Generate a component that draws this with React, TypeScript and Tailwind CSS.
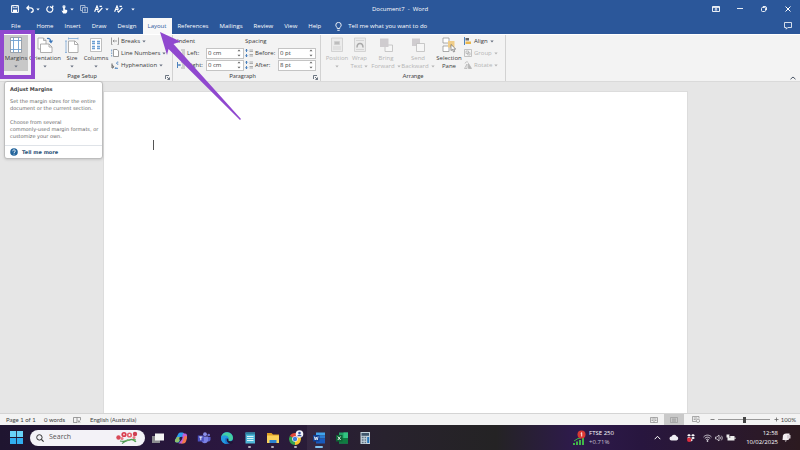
import React from 'react';
import clsx from 'clsx';

interface IconProps {
  className?: string;
}

const Caret: React.FC<IconProps> = ({ className }) => (
  <svg className={clsx('shrink-0', className)} width="4" height="3" viewBox="0 0 4 3">
    <path d="M0.3 0.5h3.4L2 2.5z" fill="currentColor" />
  </svg>
);

const Launcher: React.FC = () => (
  <button type="button" aria-label="More settings" className="absolute right-0.5 bottom-px text-gray-600">
    <svg width="5" height="5" viewBox="0 0 5 5" fill="none" stroke="currentColor" strokeWidth="0.8">
      <path d="M0.5 4V0.5H4M2 2l2.4 2.4M4.5 2.4v2.1H2.4" />
    </svg>
  </button>
);

/* Title bar */

const quickAccess = [
  {
    name: 'Save',
    box: 'w-[14px]',
    icon: (
      <svg width="8" height="8" viewBox="0 0 8 8" fill="none" stroke="currentColor">
        <path d="M0.6 0.6h6.8v6.8H0.6z" />
        <path d="M2 4.6h4v2.8H2z" fill="currentColor" stroke="none" />
        <path d="M2 0.6v2h4v-2" strokeWidth="0.7" />
      </svg>
    ),
  },
  {
    name: 'Undo',
    box: 'w-[20px]',
    caret: true,
    icon: (
      <svg width="8" height="8" viewBox="0 0 8 8" fill="none" stroke="currentColor" strokeWidth="1.3">
        <path d="M3 0.8L0.9 2.9 3 5M1 2.9h3.6C6.3 2.9 7.2 4 7.2 5.2S6.2 7.3 4.8 7.3" />
      </svg>
    ),
  },
  {
    name: 'Repeat',
    box: 'w-[12px]',
    icon: (
      <svg width="8" height="8" viewBox="0 0 8 8" fill="none" stroke="currentColor" strokeWidth="1.2">
        <path d="M2.6 1.5A3 3 0 1 0 6 2.2M7.2 0.6L6 2.8 3.9 1.5" />
      </svg>
    ),
  },
  {
    name: 'Touch mode',
    box: 'w-[20px]',
    caret: true,
    icon: (
      <svg width="7" height="9" viewBox="0 0 7 9" fill="currentColor">
        <circle cx="3" cy="1.8" r="1.7" opacity="0.7" />
        <path d="M2.2 1.5h1.6v3l2.4 0.6v2L5 8.6H2.2L0.4 5.6l1.8 0.3z" />
      </svg>
    ),
  },
  {
    name: 'Copy',
    box: 'w-[12px]',
    icon: (
      <svg width="8" height="8" viewBox="0 0 8 8" fill="none" stroke="currentColor" strokeWidth="0.8" opacity="0.7">
        <path d="M0.5 0.5h4.5v1.5M0.5 0.5v5h1.5M2.5 2.5h5v5h-5zM4 4.2h2M4 5.8h2" />
      </svg>
    ),
  },
  {
    name: 'Font',
    box: 'w-[20px]',
    caret: true,
    icon: (
      <svg width="9" height="8" viewBox="0 0 9 8" fill="none" stroke="currentColor" strokeWidth="1.2">
        <path d="M0.6 6.8L3 1l1.4 3.6M1.5 4.5h2.6M3.4 5.6l1.2 1.4L8.4 2.8M5.5 1.3h2.4" />
      </svg>
    ),
  },
  {
    name: 'Styles',
    box: 'w-[12px]',
    icon: (
      <svg width="9" height="8" viewBox="0 0 9 8" fill="none" stroke="currentColor" strokeWidth="1.2">
        <path d="M0.6 6.8L3 1l1.4 3.6M1.5 4.5h2.6M3.4 5.6l1.2 1.4L8.4 2.8M5.5 1.3h2.4" />
      </svg>
    ),
  },
];

const TitleBar: React.FC = () => (
  <header className="grid h-[18px] grid-cols-[1fr_auto_1fr] items-center">
    <div className="flex items-center gap-px pl-2">
      {quickAccess.map((item) => (
        <button
          key={item.name}
          type="button"
          aria-label={item.name}
          className={clsx('flex items-center justify-center gap-0.5', item.box)}
        >
          {item.icon}
          {item.caret && <Caret />}
        </button>
      ))}
      <button type="button" aria-label="Customize Quick Access Toolbar" className="ml-1.5">
        <Caret />
      </button>
    </div>
    <h1 className="text-[6px]">Document7&nbsp; -&nbsp; Word</h1>
    <div className="flex items-center justify-end">
      <button type="button" aria-label="Ribbon display options" className="flex w-6 justify-center">
        <svg width="8" height="6" viewBox="0 0 8 6" fill="none" stroke="currentColor" strokeWidth="0.9">
          <path d="M0.5 0.5h7v5h-7zM0.5 1.6h7M4 5V2.5M2.7 3.7L4 2.5l1.3 1.2" />
        </svg>
      </button>
      <button type="button" aria-label="Minimize" className="flex w-6 justify-center">
        <svg width="6" height="6" viewBox="0 0 6 6" stroke="currentColor" strokeWidth="0.9">
          <path d="M0 2.5h6" />
        </svg>
      </button>
      <button type="button" aria-label="Restore" className="flex w-6 justify-center">
        <svg width="6" height="6" viewBox="0 0 6 6" fill="none" stroke="currentColor" strokeWidth="0.9">
          <rect x="0.5" y="1.5" width="4" height="4" rx="1" />
          <path d="M1.8 0.5h2.2a1.5 1.5 0 0 1 1.5 1.5v2.2" />
        </svg>
      </button>
      <button type="button" aria-label="Close" className="flex w-6 justify-center">
        <svg width="6" height="6" viewBox="0 0 6 6" stroke="currentColor">
          <path d="M0.5 0.5l5 5M5.5 0.5l-5 5" />
        </svg>
      </button>
    </div>
  </header>
);

const tabs = ['File', 'Home', 'Insert', 'Draw', 'Design', 'Layout', 'References', 'Mailings', 'Review', 'View', 'Help'];

const TabBar: React.FC = () => (
  <nav className="flex h-4 items-stretch text-[6px]">
    {tabs.map((tab) => (
      <button
        key={tab}
        type="button"
        className={clsx(
          'whitespace-nowrap',
          tab === 'File' ? 'px-[11px]' : 'pr-[6px] pl-[5px]',
          tab === 'Layout' && 'bg-[#f8f8f8] text-[#2b579a]',
        )}
      >
        {tab}
      </button>
    ))}
    <button type="button" className="ml-2 flex items-center gap-1.5 whitespace-nowrap">
      <svg width="7" height="9" viewBox="0 0 7 9" fill="none" stroke="currentColor" strokeWidth="0.9">
        <path d="M2.3 6.5C2.3 5 0.8 4.7 0.8 3.1a2.7 2.7 0 0 1 5.4 0C6.2 4.7 4.7 5 4.7 6.5zM2.3 8.3h2.4" />
      </svg>
      Tell me what you want to do
    </button>
    <button type="button" aria-label="Comments" className="mr-2 ml-auto self-center">
      <svg width="8" height="8" viewBox="0 0 8 8" fill="none" stroke="currentColor" strokeWidth="0.8">
        <path d="M0.5 0.5h7v5H3.8L2.2 7.2V5.5H0.5z" />
      </svg>
    </button>
  </nav>
);

/* Ribbon */

const MarginsIcon = (
  <svg width="14" height="16" viewBox="0 0 14 16" fill="none">
    <path d="M1.5 0.5h11v15h-11z" fill="#fff" stroke="#8c9098" strokeWidth="0.8" />
    <path d="M4.5 0.5v15M9.5 0.5v15M1.5 3.5h11M1.5 12.5h11" stroke="#6d9fd0" strokeWidth="0.9" />
  </svg>
);

const OrientationIcon = (
  <svg width="16" height="16" viewBox="0 0 16 16" fill="none">
    <path d="M1 1h5.5l2.5 2.5V12H1z" fill="#fff" stroke="#9c9c9c" strokeWidth="0.8" />
    <path d="M3.5 7h8.5l3 3v5.5H3.5z" fill="#fff" stroke="#9c9c9c" strokeWidth="0.8" />
    <path d="M12 7v3h3M6.5 1v2.5H9" stroke="#9c9c9c" strokeWidth="0.8" />
    <path d="M10 1.5c2.5-0.5 4 1 4 3.5M12.3 3.6L14 5.5l1.5-2" stroke="#3975b8" strokeWidth="1.2" />
  </svg>
);

const SizeIcon = (
  <svg width="14" height="16" viewBox="0 0 14 16" fill="none">
    <path d="M3.5 4h6.5l3 3v8.5H3.5z" fill="#fff" stroke="#9c9c9c" strokeWidth="0.8" />
    <path d="M9.5 4v3.5H13" stroke="#9c9c9c" strokeWidth="0.8" />
    <path d="M3.5 1.5H13M3.5 0.5v2M13 0.5v2M1 4v11.5M0 4h2M0 15.5h2" stroke="#7ba7d4" strokeWidth="0.8" />
  </svg>
);

const ColumnsIcon = (
  <svg width="12" height="16" viewBox="0 0 12 16" fill="none">
    <path d="M0.5 1.5h11v13H0.5z" fill="#fff" stroke="#a6a6a6" strokeWidth="0.7" />
    <path
      d="M2 4.5h3M2 6.5h3M2 9.5h3M2 11.5h3M7 4.5h3M7 6.5h3M7 9.5h3M7 11.5h3"
      stroke="#6b9fd3"
      strokeWidth="1.4"
    />
  </svg>
);

const PositionIcon = (
  <svg width="14" height="16" viewBox="0 0 14 16" fill="none" stroke="#cbcbcb">
    <path d="M1.5 1h11v13.5h-11z" fill="#ebebeb" strokeWidth="0.8" />
    <path d="M4.5 4.5h5v3h-5z" fill="#bdbdbd" strokeWidth="0.6" />
    <path d="M3 10h8M3 12h8" strokeWidth="0.7" />
  </svg>
);

const WrapIcon = (
  <svg width="14" height="16" viewBox="0 0 14 16" fill="none" stroke="#cbcbcb">
    <path d="M1.5 1h11v13.5h-11z" fill="#ebebeb" strokeWidth="0.8" />
    <path d="M3 3.5h8M3 12.5h8" strokeWidth="0.7" />
    <path d="M4 10.5C4 5 10 5 10 10.5" stroke="#a9a9a9" strokeWidth="1.5" />
  </svg>
);

const ForwardIcon = (
  <svg width="14" height="16" viewBox="0 0 14 16">
    <path d="M6 8h7.5v6.5H6z" fill="#f6f6f6" stroke="#bdbdbd" strokeWidth="0.8" />
    <path d="M1 1.5h8.5V10H1z" fill="#cfcccf" />
  </svg>
);

const BackwardIcon = (
  <svg width="14" height="16" viewBox="0 0 14 16">
    <path d="M1 1.5h8V9H1z" fill="#cfcccf" />
    <path d="M5.5 6.5h8v8h-8z" fill="#f6f6f6" stroke="#bdbdbd" strokeWidth="0.8" />
  </svg>
);

const SelectionIcon = (
  <svg width="14" height="16" viewBox="0 0 14 16">
    <path d="M1 1h6v5H1zM1 9h6v5.5H1z" fill="#fff" stroke="#8a8a8a" strokeWidth="0.7" />
    <path d="M6 4h6.5v6.5H6z" fill="#f0cd88" />
    <path d="M9 7.5v6l1.5-1.2 1 2.7 1.2-0.5-1-2.5h2z" fill="#fff" stroke="#555" strokeWidth="0.6" />
  </svg>
);

interface LargeButtonProps {
  label: string;
  second?: string;
  icon: React.ReactNode;
  width: string;
  caret?: boolean;
  active?: boolean;
  disabled?: boolean;
}

const LargeButton: React.FC<LargeButtonProps> = ({ label, second, icon, width, caret = true, active, disabled }) => (
  <button
    type="button"
    disabled={disabled}
    className={clsx(
      'flex shrink-0 flex-col items-center whitespace-nowrap',
      width,
      active && 'bg-[#c8c8c8]',
      disabled && 'text-[#b5b5b5]',
    )}
  >
    <span className="flex h-[19px] items-end pb-px">{icon}</span>
    <span className="leading-2">{label}</span>
    <span className="flex h-2 items-center gap-0.5 leading-2">
      {second}
      {caret && <Caret className={disabled ? 'text-[#b5b5b5]' : 'text-gray-500'} />}
    </span>
  </button>
);

interface SmallButtonProps {
  label: string;
  icon: React.ReactNode;
  disabled?: boolean;
}

const SmallButton: React.FC<SmallButtonProps> = ({ label, icon, disabled }) => (
  <button
    type="button"
    disabled={disabled}
    className={clsx('flex h-3 items-center gap-0.5 whitespace-nowrap', disabled && 'text-[#b5b5b5]')}
  >
    {icon}
    {label}
    <Caret className={disabled ? 'text-[#b5b5b5]' : 'text-gray-500'} />
  </button>
);

interface GroupProps {
  title: string;
  width: string;
  launcher?: boolean;
  children: React.ReactNode;
}

const Group: React.FC<GroupProps> = ({ title, width, launcher, children }) => (
  <section className={clsx('relative flex shrink-0 flex-col border-r border-[#d2d2d2]', width)}>
    <div className="flex h-9">{children}</div>
    <h2 className={clsx("text-center font-['Lato',sans-serif] leading-[10px] text-[#444]", launcher && 'pr-2')}>
      {title}
    </h2>
    {launcher && <Launcher />}
  </section>
);

const IndentIcon: React.FC<{ flip?: boolean }> = ({ flip }) => (
  <svg width="8" height="8" viewBox="0 0 8 8" fill="none">
    <path d="M4 1h4M5 3h3M5 5h3M4 7h4" stroke="#8c8c8c" strokeWidth="0.7" />
    <path
      d={flip ? 'M0.5 1v6M4 4H1.5M2.5 3l-1 1 1 1' : 'M0.5 1v6M1.5 4H4M3 3l1 1-1 1'}
      stroke="#3975b8"
      strokeWidth="0.9"
    />
  </svg>
);

const SpacingIcon: React.FC = () => (
  <svg width="8" height="8" viewBox="0 0 8 8" fill="none">
    <path d="M4.5 1H8M4.5 2.5H8M4.5 5.5H8M4.5 7H8" stroke="#8c8c8c" strokeWidth="0.7" />
    <path
      d="M1.5 0v3M0.3 1.5L1.5 0.3l1.2 1.2M1.5 5v3M0.3 6.5l1.2 1.2 1.2-1.2"
      stroke="#3975b8"
      strokeWidth="0.9"
    />
  </svg>
);

interface SpinFieldProps {
  id: string;
  label: string;
  value: string;
  icon: React.ReactNode;
  labelWidth: string;
}

const SpinField: React.FC<SpinFieldProps> = ({ id, label, value, icon, labelWidth }) => (
  <div className="flex h-3 items-center">
    <label htmlFor={id} className={clsx('flex items-center gap-0.5 whitespace-nowrap', labelWidth)}>
      {icon}
      {label}
    </label>
    <div className="flex h-[11px] w-[38px] items-center border border-[#c4c4c4] bg-white pr-0.5 pl-px">
      <input id={id} defaultValue={value} className="w-0 min-w-0 flex-1 bg-transparent outline-none" />
      <svg width="4" height="8" viewBox="0 0 4 8" fill="#666">
        <path d="M2 0.5L3.5 2.3h-3zM2 7.5L3.5 5.7h-3z" />
      </svg>
    </div>
  </div>
);

const Ribbon: React.FC = () => (
  <div className="flex h-12 border-t border-b border-t-white border-b-[#dadada] bg-[#f3f3f3] text-[6px] text-[#3b3b3b]">
    <Group title="Page Setup" width="w-[173px]" launcher>
      <div className="flex pl-1">
        <LargeButton label="Margins" icon={MarginsIcon} width="w-6" active />
        <LargeButton label="Orientation" icon={OrientationIcon} width="w-[34px]" />
        <LargeButton label="Size" icon={SizeIcon} width="w-5" />
        <LargeButton label="Columns" icon={ColumnsIcon} width="w-7" />
      </div>
      <div className="flex flex-col pl-px">
        <SmallButton
          label="Breaks"
          icon={
            <svg width="8" height="8" viewBox="0 0 8 8" fill="none" stroke="#888" strokeWidth="0.8">
              <path d="M0.5 0.5v7h1M7.5 0.5v7h-1M2 4h4M3.2 2.8L2 4l1.2 1.2" />
            </svg>
          }
        />
        <SmallButton
          label="Line Numbers"
          icon={
            <svg width="8" height="8" viewBox="0 0 8 8" fill="none" strokeWidth="0.7">
              <path d="M2.5 0.5h3.5l1.5 1.5v5.5h-5z" fill="#fff" stroke="#777" />
              <path d="M0.7 0.5v2M0.7 3.5v1.5M0.7 6v1.5" stroke="#3975b8" />
            </svg>
          }
        />
        <SmallButton
          label="Hyphenation"
          icon={
            <svg width="8" height="8" viewBox="0 0 8 8" fill="none" strokeWidth="0.9">
              <path d="M1 2.5v4.5M1 5c2.2-1.2 2.2 2.5 0 2" stroke="#555" />
              <path d="M7.3 1.2c-2.2-0.7-2.2 2.5 0 2M4 7.3h3M5 6.3l-1 1" stroke="#3975b8" />
            </svg>
          }
        />
      </div>
    </Group>

    <Group title="Paragraph" width="w-[148px]" launcher>
      <div className="flex gap-px pl-1">
        <div>
          <h3 className="h-3 leading-3">Indent</h3>
          <SpinField id="indent-left" label="Left:" value="0 cm" icon={<IndentIcon />} labelWidth="w-[29px]" />
          <SpinField id="indent-right" label="Right:" value="0 cm" icon={<IndentIcon flip />} labelWidth="w-[29px]" />
        </div>
        <div>
          <h3 className="h-3 leading-3">Spacing</h3>
          <SpinField id="space-before" label="Before:" value="0 pt" icon={<SpacingIcon />} labelWidth="w-[33px]" />
          <SpinField id="space-after" label="After:" value="8 pt" icon={<SpacingIcon />} labelWidth="w-[33px]" />
        </div>
      </div>
    </Group>

    <Group title="Arrange" width="w-[185px]">
      <div className="flex pl-1">
        <LargeButton label="Position" icon={PositionIcon} width="w-6" disabled />
        <LargeButton label="Wrap" second="Text" icon={WrapIcon} width="w-[21px]" disabled />
        <LargeButton label="Bring" second="Forward" icon={ForwardIcon} width="w-8" disabled />
        <LargeButton label="Send" second="Backward" icon={BackwardIcon} width="w-8" disabled />
        <LargeButton label="Selection" second="Pane" icon={SelectionIcon} width="w-[30px]" caret={false} />
      </div>
      <div className="flex flex-col">
        <SmallButton
          label="Align"
          icon={
            <svg width="8" height="8" viewBox="0 0 8 8">
              <path d="M0.5 0v8" stroke="#3975b8" strokeWidth="0.9" />
              <path d="M1.5 1h3.5v2.5H1.5z" fill="#666" />
              <path d="M1.5 4.5h5.5V7H1.5z" fill="#e9b64c" />
            </svg>
          }
        />
        <SmallButton
          label="Group"
          disabled
          icon={
            <svg width="8" height="8" viewBox="0 0 8 8" fill="none" stroke="#b5b5b5" strokeWidth="0.8">
              <path d="M0.5 0.5h7v7h-7zM2 2h2.5v2.5H2zM3.7 3.7H6V6H3.7z" />
            </svg>
          }
        />
        <SmallButton
          label="Rotate"
          disabled
          icon={
            <svg width="8" height="8" viewBox="0 0 8 8" fill="none" stroke="#b5b5b5" strokeWidth="0.8">
              <path d="M0.5 7.5L3 3v4.5z" />
              <path d="M4.5 2.5v5h3z" fill="#b5b5b5" />
              <path d="M1 2.5C1.5 0.5 3.5 0.5 4.2 1.5" />
            </svg>
          }
        />
      </div>
    </Group>

    <button type="button" aria-label="Collapse the ribbon" className="mr-1 mb-px ml-auto self-end text-gray-600">
      <svg width="6" height="4" viewBox="0 0 6 4" fill="none" stroke="currentColor">
        <path d="M0.5 3.2L3 1l2.5 2.2" />
      </svg>
    </button>
  </div>
);

const MarginsTooltip: React.FC = () => (
  <div
    role="tooltip"
    className="absolute top-[81px] left-1 w-[99px] rounded-[3px] border border-[#bdbdbd] bg-white font-['DejaVu_Sans',sans-serif] text-[5px] leading-[7px] whitespace-nowrap text-[#666] shadow"
  >
    <div className="px-[5px] pt-1 pb-[5px]">
      <p className="mb-[5px] font-bold text-[#444]">Adjust Margins</p>
      <p className="mb-[7px]">
        Set the margin sizes for the entire
        <br />
        document or the current section.
      </p>
      <p>
        Choose from several
        <br />
        commonly-used margin formats, or
        <br />
        customize your own.
      </p>
    </div>
    <a
      href="#margins"
      className="flex h-[13px] items-center gap-1 border-t border-[#dfe3e8] px-[5px] font-bold text-[#2d5378]"
    >
      <svg width="8" height="8" viewBox="0 0 8 8" fill="none">
        <circle cx="4" cy="4" r="3.8" fill="#24659c" />
        <path d="M2.7 3.2C2.7 1.4 5.4 1.5 5.3 3.1 5.2 4 4 4 4 5M4 5.7v0.8" stroke="#fff" strokeWidth="0.9" />
      </svg>
      Tell me more
    </a>
  </div>
);

const StatusBar: React.FC = () => (
  <footer className="flex h-3 items-center border-t border-[#d4d4d4] bg-[#f3f3f3] pr-1 pl-1.5 font-['Lato',sans-serif] text-[6px] text-[#444]">
    <span className="w-[38px]">Page 1 of 1</span>
    <span className="w-[29px]">0 words</span>
    <button type="button" aria-label="Proofing" className="w-[17px]">
      <svg width="8" height="6" viewBox="0 0 8 6" fill="none" stroke="#777" strokeWidth="0.7">
        <path d="M4 5.5H0.5V0.5h7v2.5M4 0.5v5M4.8 3.5l2.5 2M7.3 3.5l-2.5 2" />
      </svg>
    </button>
    <span>English (Australia)</span>
    <div className="ml-auto flex items-center">
      <button type="button" aria-label="Read mode" className="flex w-5 justify-center">
        <svg width="8" height="6" viewBox="0 0 8 6" fill="none" stroke="#888" strokeWidth="0.7">
          <path d="M0.5 0.5h7v5h-7zM4 0.5v5M1.5 2h1.5M1.5 3.5h1.5M5 2h1.5M5 3.5h1.5" />
        </svg>
      </button>
      <button type="button" aria-label="Print layout" className="flex h-[11px] w-5 items-center justify-center bg-[#c9c9c9]">
        <svg width="8" height="6" viewBox="0 0 8 6" fill="none" stroke="#999" strokeWidth="0.7">
          <path d="M0.5 0.5h7v5h-7zM2 2h4M2 3h4M2 4.2h4" />
        </svg>
      </button>
      <button type="button" aria-label="Web layout" className="flex w-6 justify-center">
        <svg width="8" height="7" viewBox="0 0 8 7" fill="none" stroke="#888" strokeWidth="0.7">
          <path d="M4 5.5H0.5V0.5h6.5v2M1.7 2h3.5M1.7 3.5h2" />
          <circle cx="6" cy="4.8" r="1.7" />
        </svg>
      </button>
      <button type="button" aria-label="Zoom out" className="flex w-2 justify-center">
        <svg width="5" height="5" viewBox="0 0 5 5" stroke="#666" strokeWidth="0.8">
          <path d="M0.5 2.5h4" />
        </svg>
      </button>
      <input
        type="range"
        aria-label="Zoom"
        min={0}
        max={100}
        defaultValue={50}
        className="mx-0.5 h-2 w-[52px] appearance-none bg-[linear-gradient(#999,#999)] bg-[length:100%_1px] bg-center bg-no-repeat [&::-webkit-slider-thumb]:h-1.5 [&::-webkit-slider-thumb]:w-[3px] [&::-webkit-slider-thumb]:appearance-none [&::-webkit-slider-thumb]:bg-[#444]"
      />
      <button type="button" aria-label="Zoom in" className="flex w-2 justify-center">
        <svg width="5" height="5" viewBox="0 0 5 5" stroke="#666" strokeWidth="0.8">
          <path d="M0.5 2.5h4M2.5 0.5v4" />
        </svg>
      </button>
      <span className="w-4 text-right">100%</span>
    </div>
  </footer>
);

/* Windows taskbar */

const apps = [
  {
    name: 'Task view',
    icon: (
      <svg width="14" height="14" viewBox="0 0 14 14">
        <path d="M1 5h8v7H1z" fill="#8c8c90" />
        <path d="M4 2.5h9V9.5H4z" fill="#f4f4f4" />
      </svg>
    ),
  },
  {
    name: 'Copilot',
    icon: (
      <svg width="14" height="14" viewBox="0 0 14 14">
        <path d="M4.500 2.5Q5 1.5 6.5 1.5h2q1.5 0 2 2L11 5 7 6 5 11.5H3Q0.5 11.5 1 9z" fill="#2a9df0" />
        <path d="M1 9Q0.5 11.5 3 11.5q2 0 2.5-2L6.5 6 3 6z" fill="#8fbf6a" />
        <path d="M9 2.5L7.5 9 4.5 12.5h3.5q1.5 0 2.2-1.8L13 6Q13.5 2.5 11 2.5z" fill="#c05fd6" />
        <path d="M10.5 5h1.2Q13.5 5 13 7.2l-1 3.3q-0.7 2-2.5 2H6.5Q8 12.5 8.7 10z" fill="#f2784c" />
        <path d="M5.8 6h2.7L8 8.5H5z" fill="#2b1742" />
      </svg>
    ),
  },
  {
    name: 'Teams',
    icon: (
      <svg width="14" height="14" viewBox="0 0 14 14">
        <circle cx="8" cy="3.2" r="1.9" fill="#8b8fe8" />
        <circle cx="11.7" cy="4" r="1.3" fill="#6f73d4" />
        <path d="M10 6h3.5v2.8a2 2 0 0 1-3.5 1z" fill="#5a5fc9" />
        <path d="M4.5 5.5h6.5v4a3.3 3.3 0 0 1-6.5 0z" fill="#7b80e4" />
        <path d="M0.8 4.5h6v6h-6z" fill="#4b50bf" />
        <path d="M2.2 6h3.2M3.8 6v3.2" stroke="#fff" strokeWidth="0.9" />
      </svg>
    ),
  },
  {
    name: 'Edge',
    icon: (
      <svg width="14" height="14" viewBox="0 0 14 14">
        <circle cx="7" cy="7" r="6" fill="#1b75cf" />
        <path d="M1.1 6.2A6 6 0 0 1 13 7c0 2-1.5 3-3.2 3C8.5 10 8 9.3 8.5 8.4 9.5 6 6 3.5 1.1 6.2z" fill="#43cfa3" />
        <path d="M1 6.5C2 3.5 8 3.5 8.5 7.5 6 5.5 4.3 8 5 10.2 5.7 12 7 13 7 13 3 13 0.7 10 1 6.5z" fill="#249be0" />
        <path d="M8.5 8.3C7.5 10 10 11 12.3 9.7L13 12l-2 1C7.5 12 6 10 7 7.5z" fill="#211437" />
      </svg>
    ),
  },
  {
    name: 'Notepad',
    running: true,
    icon: (
      <svg width="14" height="14" viewBox="0 0 14 14">
        <path d="M2.5 1.5h9.5v11H2.5z" fill="#4fb7d8" />
        <path d="M2.5 1.5h9.5V3.5H2.5z" fill="#2a7f9f" />
        <path d="M4 5.5h6.5M4 7.5h6.5M4 9.5h6.5" stroke="#d9f4fb" />
      </svg>
    ),
  },
  {
    name: 'File Explorer',
    running: true,
    icon: (
      <svg width="14" height="14" viewBox="0 0 14 14">
        <path d="M1 2h4.5l1.5 1.5h6v3H1z" fill="#e0a024" />
        <path d="M1 4.5h12v7.5H1z" fill="#fbd25b" />
        <path d="M3.5 12V9h7v3z" fill="#2d83d2" />
      </svg>
    ),
  },
  {
    name: 'Chrome',
    running: true,
    icon: (
      <svg width="16" height="16" viewBox="0 0 16 16">
        <path d="M7 9L1.8 6A6 6 0 0 1 12.2 6z" fill="#e04738" />
        <path d="M7 9L1.8 6A6 6 0 0 0 7 15z" fill="#34a353" />
        <path d="M7 9l5.2-3A6 6 0 0 1 7 15z" fill="#f9c62e" />
        <circle cx="7" cy="9" r="2.8" fill="#fff" />
        <circle cx="7" cy="9" r="2.2" fill="#3c7de0" />
        <circle cx="11.5" cy="4" r="3.8" fill="#f2f4fb" />
        <circle cx="11.5" cy="3" r="1.3" fill="#35509c" />
        <path d="M9.2 6.3c0.5-2 4-2 4.6 0z" fill="#35509c" />
      </svg>
    ),
  },
  {
    name: 'Word',
    active: true,
    icon: (
      <svg width="14" height="14" viewBox="0 0 14 14">
        <path d="M4 1.5h9v3H4z" fill="#41a5ee" />
        <path d="M4 4.5h9v3H4z" fill="#2b7cd3" />
        <path d="M4 7.5h9v5H4z" fill="#185abd" />
        <path d="M1 4h6.5v6.5H1z" fill="#103f91" />
        <path d="M2.3 5.5l0.9 3.5 1-3 1 3 0.9-3.5" stroke="#fff" strokeWidth="0.8" fill="none" />
      </svg>
    ),
  },
  {
    name: 'Excel',
    icon: (
      <svg width="14" height="14" viewBox="0 0 14 14">
        <path d="M4 1.5h9v11H4z" fill="#21a366" />
        <path d="M8.5 1.5H13V7H8.5z" fill="#33c481" />
        <path d="M4 7h9v5.5H4z" fill="#107c41" />
        <path d="M1 4h6.5v6.5H1z" fill="#0e6335" />
        <path d="M2.8 5.5l2.8 3.5M5.6 5.5L2.8 9" stroke="#fff" strokeWidth="0.9" />
      </svg>
    ),
  },
  {
    name: 'Calculator',
    icon: (
      <svg width="14" height="14" viewBox="0 0 14 14">
        <path d="M2.5 1h9.5v12H2.5z" fill="#c4d2dc" />
        <path d="M3.5 2h7.5v2.8H3.5z" fill="#40566c" />
        <path
          d="M3.8 6.5h1.8M3.8 9h1.8M3.8 11.5h1.8M6.6 6.5h1.5M6.6 9h1.5M6.6 11.5h1.5"
          stroke="#5f7384"
          strokeWidth="1.4"
        />
        <path d="M9.2 6h2v6h-2z" fill="#2473b8" />
      </svg>
    ),
  },
];

const Taskbar: React.FC = () => (
  <div className="flex h-[25px] items-center bg-[linear-gradient(90deg,#1f1530,#2b1740_30%,#28222e_48%,#242324_62%,#2e1a4c_72%,#28163f_80%,#2c1a20)] pl-[10px] text-white">
    <button type="button" aria-label="Start">
      <svg width="13" height="13" viewBox="0 0 13 13">
        <path d="M0 0h6.1v6.1H0zM6.900 0H13v6.1H6.9z" fill="#68d2f8" />
        <path d="M0 6.9h6.1V13H0zM6.9 6.9H13V13H6.9z" fill="#32aef0" />
      </svg>
    </button>
    <label className="ml-[7px] flex h-4 w-[115px] items-center rounded-full bg-[#f3f2f7] px-1.5 text-[#555]">
      <svg width="8" height="8" viewBox="0 0 8 8" fill="none" stroke="#333" className="mr-[5px] shrink-0">
        <circle cx="3.4" cy="3.4" r="2.7" />
        <path d="M5.4 5.4L7.6 7.6" strokeWidth="1.2" />
      </svg>
      <input
        type="search"
        aria-label="Search"
        placeholder="Search"
        className="w-0 min-w-0 flex-1 text-[7px] outline-none placeholder:text-[#555]"
      />
      <svg width="24" height="13" viewBox="0 0 24 13" fill="none">
        <path d="M5 10Q10 11 14 9T21 11M7 12.5Q12 9 20 8" stroke="#4f9a55" strokeWidth="1.2" />
        <path d="M9 10l4-2 2 2zM17 9l4-1-1 3z" fill="#67ae60" />
        <circle cx="3.5" cy="6.5" r="2.2" fill="#d84a58" />
        <circle cx="9" cy="3.5" r="2.6" fill="#d93c4d" />
        <circle cx="9" cy="3.5" r="1" fill="#f8d0cf" />
        <circle cx="14.5" cy="4" r="2.6" fill="#e4606b" />
        <circle cx="14.5" cy="4" r="1" fill="#fff" />
        <circle cx="20" cy="3" r="2.2" fill="#cf3f52" />
        <circle cx="19" cy="6.5" r="1.5" fill="#e67b82" />
        <circle cx="7" cy="7.5" r="1.5" fill="#e67b82" />
      </svg>
    </label>
    <div className="ml-px flex self-stretch">
      {apps.map((app) => (
        <button
          key={app.name}
          type="button"
          aria-label={app.name}
          className={clsx('relative flex w-[23px] items-center justify-center', app.active && 'bg-white/5')}
        >
          {app.icon}
          {(app.running || app.active) && (
            <span
              className={clsx(
                'absolute bottom-0.5 h-0.5 rounded-full',
                app.active ? 'w-2 bg-[#7fc2f0]' : 'w-[3px] bg-[#b5b0bd]',
              )}
            />
          )}
        </button>
      ))}
    </div>

    <button
      type="button"
      className="mr-10 ml-auto flex items-center gap-[3px] text-left text-[6px] leading-[9px] whitespace-nowrap"
    >
      <svg width="13" height="16" viewBox="0 0 13 16">
        <path d="M1 15v-2M4 15v-3.5M7 15v-5M10 15V8" stroke="#41b649" strokeWidth="2" />
        <path d="M1 11l4-2.5L8 8" stroke="#41b649" fill="none" />
        <circle cx="8.5" cy="4.5" r="4" fill="#d93a34" />
        <path d="M7.7 3.5l1-0.8v3.8" stroke="#fff" strokeWidth="0.9" fill="none" />
      </svg>
      <span>
        FTSE 250
        <br />
        <span className="text-[#c7c0d1]">+0.71%</span>
      </span>
    </button>
    <div className="flex items-center">
      <button type="button" aria-label="Show hidden icons" className="mr-2">
        <svg width="7" height="5" viewBox="0 0 7 5" fill="none" stroke="currentColor">
          <path d="M0.7 4.2L3.5 1.3l2.8 2.9" />
        </svg>
      </button>
      <svg width="10" height="7" viewBox="0 0 10 7" fill="#f0edf4" className="mr-2">
        <path d="M2.5 6.5a2 2 0 0 1 0-4 2.8 2.8 0 0 1 5-0.3 2.2 2.2 0 0 1 0 4.3z" />
      </svg>
      <svg width="8" height="8" viewBox="0 0 8 8" className="mr-2">
        <path d="M2 0l2 1.3L2 2.6 0 1.3zM6 0l2 1.3-2 1.3-2-1.3zM2 2.7L4 4 2 5.3 0 4z" fill="#fff" />
        <path d="M6 2.7L8 4 6 5.3 4 4zM4 4.8L6 6 4 7.4 2 6z" fill="#fff" />
        <circle cx="2.2" cy="5.8" r="2.2" fill="#e02b3c" />
      </svg>
      <button type="button" aria-label="Network, volume and battery" className="mr-[3px] flex items-center gap-[3px]">
        <svg width="9" height="8" viewBox="0 0 9 8" fill="none" stroke="#ddd8e0" strokeWidth="0.9">
          <path d="M0.5 3C2.8 0.5 6.2 0.5 8.5 3M1.8 4.4C3.5 2.7 5.5 2.7 7.2 4.4M3.1 5.8c1-0.9 1.8-0.9 2.8 0" />
          <circle cx="4.5" cy="7" r="0.6" fill="#ddd8e0" />
        </svg>
        <svg width="8" height="8" viewBox="0 0 8 8" fill="none" stroke="#ddd8e0" strokeWidth="0.8">
          <path d="M0.5 3h1.3L4 1v6L1.8 5H0.5zM5.2 2.8c0.6 0.7 0.6 1.7 0 2.4M6.3 1.7c1.3 1.5 1.3 3.2 0 4.6" />
        </svg>
        <svg width="10" height="7" viewBox="0 0 10 7">
          <path d="M1.5 2h7v4.5h-7z" fill="#eee" />
          <path d="M8.5 3.5h1v1.5h-1zM0.5 0.5h3v3h-3z" fill="#eee" />
          <path d="M3.8 1v3" stroke="#2b1a2b" strokeWidth="0.6" />
        </svg>
      </button>
      <button type="button" className="w-[39px] text-right text-[6px] leading-[9px] whitespace-nowrap">
        12:58
        <br />
        10/02/2025
      </button>
      <button type="button" aria-label="Notifications" className="mr-[9px] ml-1">
        <svg width="9" height="9" viewBox="0 0 9 9">
          <path d="M1 2.5Q1.5 0.5 4 0.5h3.5v4L6.5 7H0.5z" fill="#f3eef1" />
          <path d="M5 2h3.5v3.5H5z" fill="#d8cfd5" />
          <path d="M2.5 7.5h2.5L3.7 8.7z" fill="#f3eef1" />
        </svg>
      </button>
    </div>
  </div>
);

/* Callout box round the Margins button and the arrow to the Layout tab */
const Callouts: React.FC = () => (
  <>
    <div className="pointer-events-none absolute top-[30px] left-0 h-[49px] w-[35px] border-4 border-[#9048cf]" />
    <svg className="pointer-events-none absolute top-[30px] left-[158px]" width="84" height="91" viewBox="0 0 84 91">
      <path d="M2 2L22.5 11.5 15.5 14 83 89 82 90 10.5 19 9 25z" fill="#9048cf" />
    </svg>
  </>
);

export default function App() {
  return (
    <div className="relative flex min-h-screen flex-col overflow-hidden bg-[#e6e6e6] font-['Open_Sans',sans-serif]">
      <div className="bg-[#2b579a] text-white">
        <TitleBar />
        <TabBar />
      </div>
      <Ribbon />
      <main className="flex flex-1 pt-[9px] pr-[112px] pl-[103px]">
        <div className="flex-1 border border-b-0 border-[#dcdcdc] bg-white pt-12 pl-[49px]">
          <div className="h-[10px] w-px bg-[#555]" />
        </div>
      </main>
      <StatusBar />
      <Taskbar />
      <MarginsTooltip />
      <Callouts />
    </div>
  );
}
